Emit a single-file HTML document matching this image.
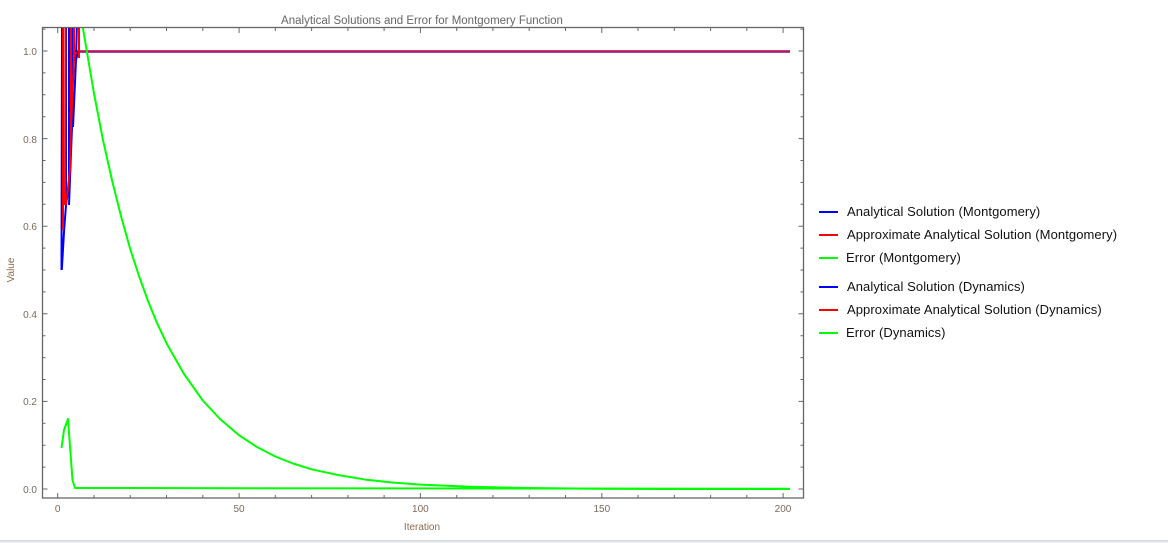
<!DOCTYPE html>
<html><head><meta charset="utf-8"><style>
html,body{margin:0;padding:0;background:#fff;width:1168px;height:543px;overflow:hidden}
svg{display:block}
text{font-family:"Liberation Sans",sans-serif}
</style></head><body>
<svg id="s" width="1168" height="543" viewBox="0 0 1168 543" xmlns="http://www.w3.org/2000/svg">
<rect x="0" y="540" width="1168" height="3" fill="#e8ebee"/>
<line x1="0" y1="540.5" x2="1168" y2="540.5" stroke="#d4d8dc"/>
<text x="422" y="24" font-size="11.5" fill="#666" text-anchor="middle">Analytical Solutions and Error for Montgomery Function</text>
<text x="422" y="530" font-size="10" fill="#8a6a50" text-anchor="middle">Iteration</text>
<text transform="translate(14,270) rotate(-90)" font-size="10" fill="#8a6a50" text-anchor="middle">Value</text>
<g id="ticks" stroke="#666" stroke-width="1"></g>
<rect x="42.5" y="27.5" width="761" height="470.5" fill="none" stroke="#666" stroke-width="1.3"/>
<g font-size="10" fill="#7a6a5c" text-anchor="end">
<text x="37" y="493">0.0</text><text x="37" y="405">0.2</text><text x="37" y="318">0.4</text><text x="37" y="230">0.6</text><text x="37" y="143">0.8</text><text x="37" y="55">1.0</text>
</g>
<g font-size="10" fill="#7a6a5c" text-anchor="middle">
<text x="57.7" y="512">0</text><text x="239" y="512">50</text><text x="420.4" y="512">100</text><text x="601.8" y="512">150</text><text x="783" y="512">200</text>
</g>
<svg x="42.5" y="28" width="761" height="470" viewBox="42.5 28 761 470" overflow="hidden">
<g fill="none" stroke-width="2" stroke-linejoin="round">
<line x1="74" y1="51.5" x2="790" y2="51.5" stroke="#6040d0" stroke-width="2.8"/>
<line x1="74" y1="51.5" x2="790" y2="51.5" stroke="#d81040" stroke-width="1.8"/>
<path stroke="#0000ff" d="M61.5,270 L62,20 M61.8,270 L64,232 L66,205 L66,20 M66,205 L69,185 L69,20 M69,205 L72,127 L73,20 M73,127 L76,60 L77,20 M76,60 L78,52 L80,52"/>
<path stroke="#ff0000" d="M63,230 L63,20 M65,205 L65.5,20 M66,205 L70,170 L71,127 L71,20 M71,127 L74,60 L74,20 M74,60 L76,52 M79,58 L79,20"/>
<path stroke="#00ff00" d="M81,20 L83.1,29.1 L94,93.5 L103,140 L112.1,180.6 L121,216 L130.2,249 L139,276 L148.4,302 L157,323 L166.5,343.2 L184,374 L202.8,400.5 L220,419 L239.1,435.3 L257,447 L275.3,456.5 L293,463.5 L311.6,469.3 L338,475 L366,479.7 L392,482.5 L420.4,484.6 L470,486.8 L529,488 L600,488.8 L660,489 L790,489"/>
<path stroke="#00ff00" d="M61.5,448 L64,430 L68,419 L72.5,480 L75,488 L790,488.8"/>
</g>
</svg>
<g font-size="13" fill="#111" letter-spacing="0.08">
<line x1="819" y1="212" x2="838" y2="212" stroke="#0000ff" stroke-width="2"/><text x="847" y="216">Analytical Solution (Montgomery)</text>
<line x1="819" y1="235" x2="838" y2="235" stroke="#ff0000" stroke-width="2"/><text x="847" y="239">Approximate Analytical Solution (Montgomery)</text>
<line x1="819" y1="258" x2="838" y2="258" stroke="#00ff00" stroke-width="2"/><text x="846" y="262">Error (Montgomery)</text>
<line x1="819" y1="287" x2="838" y2="287" stroke="#0000ff" stroke-width="2"/><text x="847" y="291">Analytical Solution (Dynamics)</text>
<line x1="819" y1="310" x2="838" y2="310" stroke="#ff0000" stroke-width="2"/><text x="847" y="314">Approximate Analytical Solution (Dynamics)</text>
<line x1="819" y1="333" x2="838" y2="333" stroke="#00ff00" stroke-width="2"/><text x="846" y="337">Error (Dynamics)</text>
</g>
</svg>
<script>
var g=document.getElementById('ticks'),d='';
for(var i=0;i<=200;i+=10){var x=57.7+3.627*i,L=(i%50==0)?5:3;d+='M'+x.toFixed(1)+',498V'+(498-L)+'M'+x.toFixed(1)+',28V'+(28+L);}
for(var k=0;k<=21;k++){var y=489-21.9*k,L=(k%4==0)?5:3;if(y<28)break;d+='M42.5,'+y.toFixed(1)+'H'+(42.5+L)+'M803.5,'+y.toFixed(1)+'H'+(803.5-L);}
var p=document.createElementNS('http://www.w3.org/2000/svg','path');p.setAttribute('d',d);g.appendChild(p);
</script>
</body></html>
